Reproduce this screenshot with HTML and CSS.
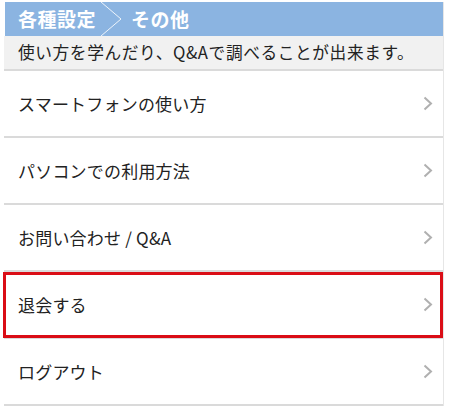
FILE: index.html
```html
<!DOCTYPE html>
<html lang="ja">
<head>
<meta charset="utf-8">
<link rel="stylesheet" href="styles.css">
</head>
<body>
<div class="page">
  <div class="crumbs">
    <span class="crumb">各種設定</span>
    <svg class="sep" width="26" height="34" viewBox="0 0 26 34"><polyline points="1,0 21,17 1,34" fill="none" stroke="#ffffff" stroke-opacity="0.85" stroke-width="1"/></svg>
    <span class="crumb">その他</span>
  </div>
  <div class="desc">使い方を学んだり、Q&amp;Aで調べることが出来ます。</div>
  <ul class="menu">
    <li class="item"><span class="label">スマートフォンの使い方</span><svg class="chev" width="10" height="15" viewBox="0 0 10 15"><polyline points="1.5,1.5 8,7.5 1.5,13.5" fill="none" stroke="#b0b0b0" stroke-width="2"/></svg></li>
    <li class="item"><span class="label">パソコンでの利用方法</span><svg class="chev" width="10" height="15" viewBox="0 0 10 15"><polyline points="1.5,1.5 8,7.5 1.5,13.5" fill="none" stroke="#b0b0b0" stroke-width="2"/></svg></li>
    <li class="item"><span class="label">お問い合わせ / Q&amp;A</span><svg class="chev" width="10" height="15" viewBox="0 0 10 15"><polyline points="1.5,1.5 8,7.5 1.5,13.5" fill="none" stroke="#b0b0b0" stroke-width="2"/></svg></li>
    <li class="item highlight"><span class="label">退会する</span><svg class="chev" width="10" height="15" viewBox="0 0 10 15"><polyline points="1.5,1.5 8,7.5 1.5,13.5" fill="none" stroke="#b0b0b0" stroke-width="2"/></svg></li>
    <li class="item"><span class="label">ログアウト</span><svg class="chev" width="10" height="15" viewBox="0 0 10 15"><polyline points="1.5,1.5 8,7.5 1.5,13.5" fill="none" stroke="#b0b0b0" stroke-width="2"/></svg></li>
  </ul>
</div>
</body>
</html>
```
FILE: styles.css
```css
html, body {
  margin: 0;
  padding: 0;
  background: #ffffff;
}
body {
  font-family: "Noto Sans CJK JP", "Noto Sans", sans-serif;
  color: #222222;
}
.page {
  margin: 2px 0 0 4px;
  width: 440px;
  border-right: 1px solid #e6e6e6;
  box-sizing: border-box;
}
.crumbs {
  display: flex;
  align-items: center;
  height: 34px;
  background: #8bb4e1;
  margin-left: 1px;
  padding-left: 13px;
  color: #ffffff;
  font-weight: bold;
}
.crumb {
  font-size: 19px;
  line-height: 34px;
  letter-spacing: 0.5px;
}
.sep {
  display: block;
  margin: 0 5px 0 4px;
}
.desc {
  background: #f1f1f1;
  height: 33px;
  line-height: 33px;
  padding-left: 14px;
  font-size: 16.7px;
  letter-spacing: 0.6px;
  border-bottom: 2px solid #dadada;
  white-space: nowrap;
}
.menu {
  list-style: none;
  margin: 0;
  padding: 0;
}
.item {
  position: relative;
  display: flex;
  align-items: center;
  justify-content: space-between;
  height: 65px;
  padding: 0 10px 0 14px;
  border-bottom: 2px solid #dadada;
  font-size: 17px;
  letter-spacing: 0.2px;
}
.label {
  line-height: 1;
}
.chev {
  display: block;
}
.highlight::after {
  content: "";
  position: absolute;
  left: -1px;
  right: 0;
  top: 0;
  bottom: -1px;
  border: 3px solid #da0d16;
  pointer-events: none;
}
```
